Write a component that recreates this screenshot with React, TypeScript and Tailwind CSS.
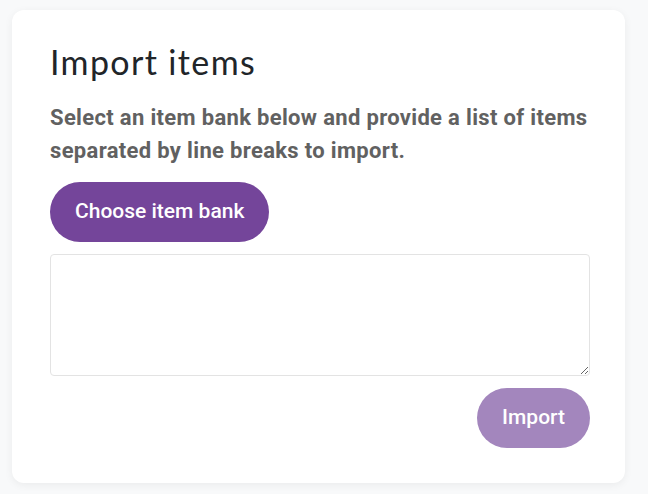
export default function App() {
	return (
		<div className="min-h-[494px] bg-[#f8f9fa] pt-[10px] pl-[12px]">
			<section className="w-[613px] rounded-[12px] bg-white pl-[38px] pr-[35px] pt-[32px] pb-[35px] shadow-[0_2px_8px_rgba(0,0,0,0.06)]">
				<h1 className="font-['Lato',sans-serif] text-[34px] leading-[40px] tracking-[0.04em] text-[#212529]">Import items</h1>
				<p className="mt-[19px] font-['Roboto',sans-serif] text-[22px] font-bold leading-[33px] tracking-[0.015em] text-[#616161]">
					Select an item bank below and provide a list of items separated by line breaks to import.
				</p>
				<button
					type="button"
					className="mt-[15px] h-[60px] rounded-full bg-[#74459a] px-[25px] font-['Roboto',sans-serif] text-[21px] font-medium text-white"
				>
					Choose item bank
				</button>
				<textarea className="mt-[12px] block h-[122px] w-full rounded-[4px] border border-[#e3e3e3] p-2 font-['Roboto',sans-serif] outline-none" />
				<div className="mt-[12px] flex justify-end">
					<button
						type="button"
						className="h-[60px] rounded-full bg-[#a386bd] px-[25px] font-['Roboto',sans-serif] text-[21px] font-medium text-white"
					>
						Import
					</button>
				</div>
			</section>
		</div>
	)
}
